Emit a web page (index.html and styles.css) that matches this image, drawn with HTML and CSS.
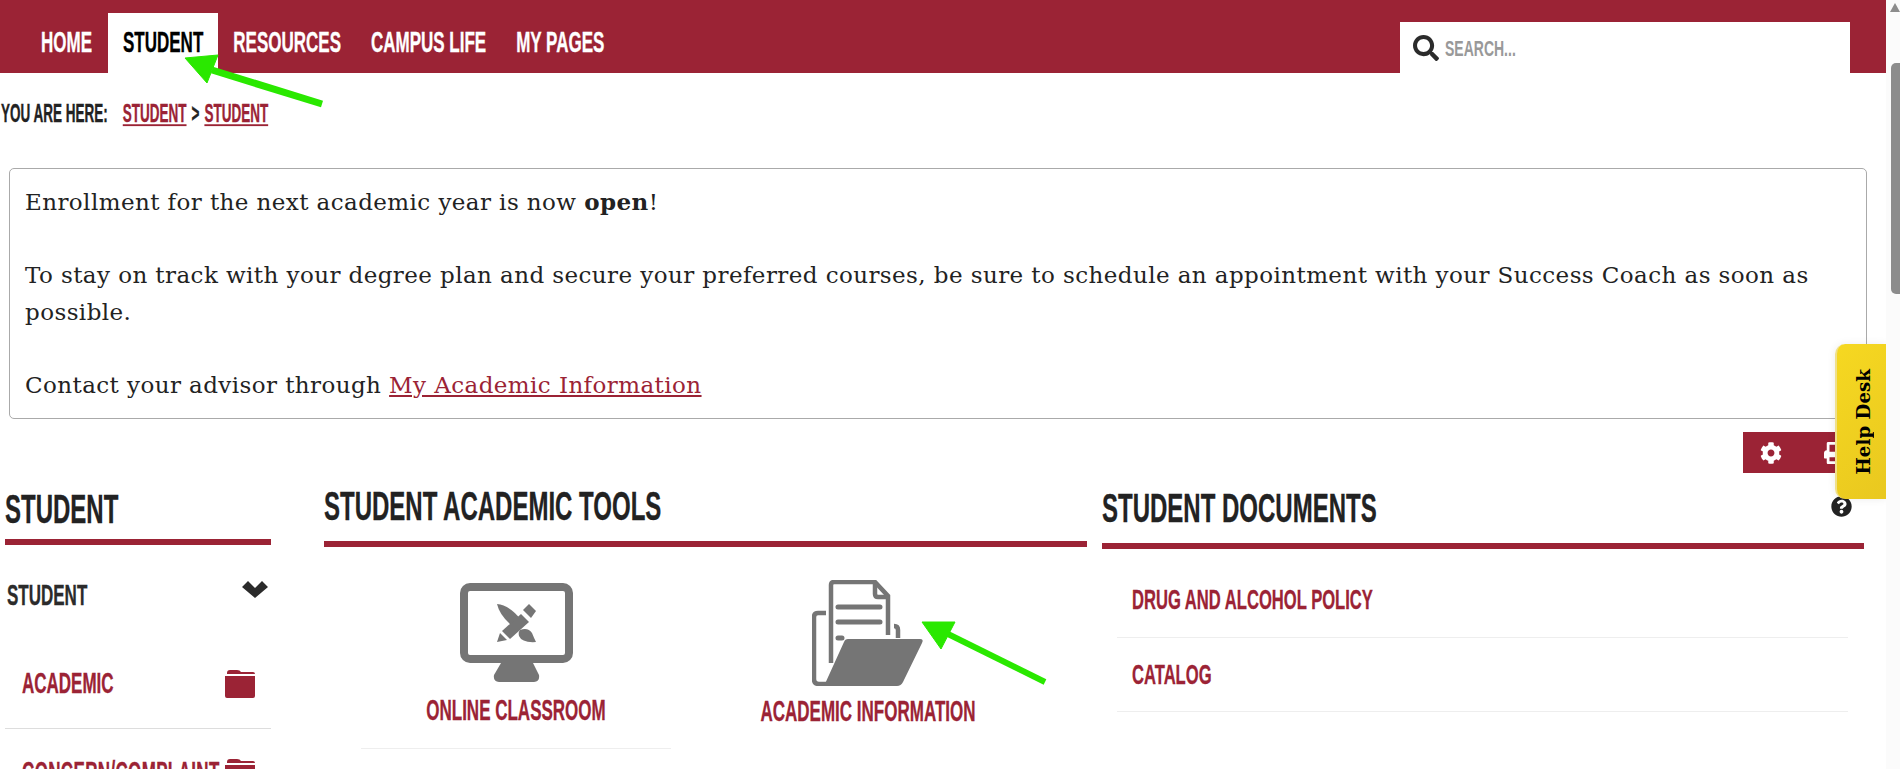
FILE: index.html
```html
<!DOCTYPE html>
<html lang="en">
<head>
    <meta charset="UTF-8">
    <title>Student</title>
    <link rel="stylesheet" href="styles.css">
</head>
<body>
    <div class="page">
        <header class="topbar">
            <nav class="mainnav">
                <a href="#"><span class="tall">Home</span></a>
                <a href="#" class="active"><span class="tall">Student</span></a>
                <a href="#"><span class="tall">Resources</span></a>
                <a href="#"><span class="tall">Campus Life</span></a>
                <a href="#"><span class="tall">My Pages</span></a>
            </nav>
            <div class="search">
                <svg class="search-icon" viewBox="0 0 512 512"><path d="M505 442.7L405.3 343c-4.5-4.5-10.6-7-17-7H372c27.6-35.3 44-79.7 44-128C416 93.1 322.9 0 208 0S0 93.1 0 208s93.1 208 208 208c48.3 0 92.7-16.4 128-44v16.3c0 6.4 2.5 12.5 7 17l99.7 99.7c9.4 9.4 24.6 9.4 33.9 0l28.3-28.3c9.4-9.4 9.4-24.6.1-34zM208 336c-70.7 0-128-57.2-128-128 0-70.7 57.2-128 128-128 70.7 0 128 57.2 128 128 0 70.7-57.2 128-128 128z"/></svg>
                <span class="tall">Search...</span>
            </div>
        </header>

        <div class="crumbs">
            <span class="tall crumb-label">You are here:</span>
            <a href="#" class="tall">Student</a>
            <span class="tall crumb-sep">&gt;</span>
            <a href="#" class="tall">Student</a>
        </div>

        <div class="notice">
            <p>Enrollment for the next academic year is now <strong>open</strong>!</p>
            <p>To stay on track with your degree plan and secure your preferred courses, be sure to schedule an appointment with your Success Coach as soon as possible.</p>
            <p>Contact your advisor through <a href="#">My Academic Information</a></p>
        </div>

        <div class="toolbar">
            <svg viewBox="0 0 512 512"><path d="M487.4 315.7l-42.6-24.6c4.3-23.2 4.3-47 0-70.2l42.6-24.6c4.9-2.8 7.1-8.6 5.5-14-11.1-35.6-30-67.8-54.7-94.6-3.8-4.1-10-5.1-14.8-2.3L380.8 110c-17.9-15.4-38.5-27.3-60.8-35.1V25.8c0-5.6-3.9-10.5-9.4-11.7-36.7-8.2-74.3-7.8-109.2 0-5.5 1.2-9.4 6.1-9.4 11.7V75c-22.2 7.9-42.8 19.8-60.8 35.1L88.7 85.5c-4.9-2.8-11-1.9-14.8 2.3-24.7 26.7-43.6 58.9-54.7 94.6-1.7 5.4.6 11.2 5.5 14L67.3 221c-4.3 23.2-4.3 47 0 70.2l-42.6 24.6c-4.9 2.8-7.1 8.6-5.5 14 11.1 35.6 30 67.8 54.7 94.6 3.8 4.1 10 5.1 14.8 2.3l42.6-24.6c17.9 15.4 38.5 27.3 60.8 35.1v49.2c0 5.6 3.9 10.5 9.4 11.7 36.7 8.2 74.3 7.8 109.2 0 5.5-1.2 9.4-6.1 9.4-11.7v-49.2c22.2-7.9 42.8-19.8 60.8-35.1l42.6 24.6c4.9 2.8 11 1.9 14.8-2.3 24.7-26.7 43.6-58.9 54.7-94.6 1.5-5.5-.7-11.3-5.6-14.1zM256 336c-44.1 0-80-35.9-80-80s35.9-80 80-80 80 35.9 80 80-35.9 80-80 80z"/></svg>
            <svg viewBox="0 0 512 512"><path d="M448 192V77.25c0-8.49-3.37-16.62-9.37-22.63L393.37 9.37c-6-6-14.14-9.37-22.63-9.37H96C78.33 0 64 14.33 64 32v160c-35.35 0-64 28.65-64 64v112c0 8.84 7.16 16 16 16h48v96c0 17.67 14.33 32 32 32h320c17.67 0 32-14.33 32-32v-96h48c8.84 0 16-7.16 16-16V256c0-35.35-28.65-64-64-64zm-64 256H128v-96h256v96zm0-224H128V64h192v48c0 8.84 7.16 16 16 16h48v96zm48 72c-13.25 0-24-10.75-24-24 0-13.26 10.75-24 24-24s24 10.74 24 24c0 13.25-10.75 24-24 24z"/></svg>
        </div>

        <div class="columns">
            <aside class="col-left">
                <h2 class="col-title"><span class="tall">Student</span></h2>
                <div class="menu-head">
                    <span class="tall">Student</span>
                    <svg viewBox="0 0 26 18"><path d="M0 7L6 1L13 8L20 1L26 7L13 18Z"/></svg>
                </div>
                <a href="#" class="menu-item">
                    <span class="tall">Academic</span>
                    <svg viewBox="0 0 30 28"><path d="M2 4V3Q2 0 5 0H12Q15 0 16 2H28Q30 2 30 4ZM0 6H30V26Q30 28 28 28H2Q0 28 0 26Z"/></svg>
                </a>
                <a href="#" class="menu-item">
                    <span class="tall">Concern/Complaint</span>
                    <svg viewBox="0 0 30 28"><path d="M2 4V3Q2 0 5 0H12Q15 0 16 2H28Q30 2 30 4ZM0 6H30V26Q30 28 28 28H2Q0 28 0 26Z"/></svg>
                </a>
            </aside>

            <main class="col-center">
                <h2 class="col-title"><span class="tall">Student Academic Tools</span></h2>
                <div class="tiles">
                    <a href="#" class="tile divided">
                        <svg class="tile-icon" width="113" height="99" viewBox="0 0 113 99">
                            <rect x="4" y="4" width="105" height="72" rx="6" fill="none" stroke="#757575" stroke-width="8"/>
                            <path d="M41 80H73L79 92Q80 99 74 99H39Q33 99 34 92Z"/>
                            <path d="M37 21Q50 22 62 38L55 45Q40 34 37 21Z"/>
                            <path d="M60 47Q68 44 72 50Q74 55 76 59Q62 60 59 53Q58 49 60 47Z"/>
                            <path d="M61 31L69 39L50 56L42 48Z"/>
                            <path d="M69 21L76 28L71 35L63 27Z"/>
                            <path d="M40 50L47 57L37 59Z"/>
                        </svg>
                        <span class="tall">Online Classroom</span>
                    </a>
                    <a href="#" class="tile">
                        <svg class="tile-icon" width="112" height="106" viewBox="0 0 112 106">
                            <g fill="none" stroke="#757575" stroke-width="4.5">
                                <path d="M19 83V5Q19 2 22 2H63L76 16V55"/>
                                <path d="M63 2V14Q63 17 66 17H76"/>
                                <path d="M14 33H6Q2 33 2 37V99Q2 104 7 104H14"/>
                                <path d="M82 46Q86 46 86 50V58"/>
                                <path d="M26 27H68M26 42H68M26 58H30" stroke-width="5" stroke-linecap="round"/>
                            </g>
                            <path d="M36 59H108Q112 59 110 63L91 102Q89 106 85 106H12L32 62Q33 59 36 59Z"/>
                        </svg>
                        <span class="tall">Academic Information</span>
                    </a>
                </div>
            </main>

            <section class="col-right">
                <h2 class="col-title">
                    <span class="tall">Student Documents</span>
                    <svg class="help" viewBox="0 0 512 512"><path d="M504 256c0 136.997-111.043 248-248 248S8 392.997 8 256C8 119.083 119.043 8 256 8s248 111.083 248 248zM262.655 90c-54.497 0-89.255 22.957-116.549 63.758-3.536 5.286-2.353 12.415 2.715 16.258l34.699 26.31c5.205 3.947 12.621 3.008 16.665-2.122 17.864-22.658 30.113-35.797 57.303-35.797 20.429 0 45.698 13.148 45.698 32.958 0 14.976-12.363 22.667-32.534 33.976C247.128 238.528 216 254.941 216 296v4c0 6.627 5.373 12 12 12h56c6.627 0 12-5.373 12-12v-1.333c0-28.462 83.186-29.647 83.186-106.667 0-58.002-60.165-102-116.531-102zM256 338c-25.365 0-46 20.635-46 46 0 25.364 20.635 46 46 46s46-20.636 46-46c0-25.365-20.635-46-46-46z"/></svg>
                </h2>
                <ul class="doc-list">
                    <li><a href="#" class="tall">Drug and Alcohol Policy</a></li>
                    <li><a href="#" class="tall">Catalog</a></li>
                </ul>
                <h2 class="col-title next">
                    <span class="tall">Life at Park</span>
                    <svg class="help" viewBox="0 0 512 512"><path d="M504 256c0 136.997-111.043 248-248 248S8 392.997 8 256C8 119.083 119.043 8 256 8s248 111.083 248 248zM262.655 90c-54.497 0-89.255 22.957-116.549 63.758-3.536 5.286-2.353 12.415 2.715 16.258l34.699 26.31c5.205 3.947 12.621 3.008 16.665-2.122 17.864-22.658 30.113-35.797 57.303-35.797 20.429 0 45.698 13.148 45.698 32.958 0 14.976-12.363 22.667-32.534 33.976C247.128 238.528 216 254.941 216 296v4c0 6.627 5.373 12 12 12h56c6.627 0 12-5.373 12-12v-1.333c0-28.462 83.186-29.647 83.186-106.667 0-58.002-60.165-102-116.531-102zM256 338c-25.365 0-46 20.635-46 46 0 25.364 20.635 46 46 46s46-20.636 46-46c0-25.365-20.635-46-46-46z"/></svg>
                </h2>
            </section>
        </div>

        <a href="#" class="helpdesk"><span>Help Desk</span></a>

        <svg class="arrows" width="1887" height="769" viewBox="0 0 1887 769">
            <line x1="212" y1="70" x2="322" y2="104" stroke-width="7"/>
            <polygon points="185,58 218,55 207,83"/>
            <line x1="948" y1="634" x2="1045" y2="682" stroke-width="6"/>
            <polygon points="922,622 955,622 941,649"/>
        </svg>
    </div>

    <div class="scrollbar">
        <div class="scroll-up"></div>
        <div class="scroll-thumb"></div>
    </div>
</body>
</html>
```

FILE: styles.css
```css
* {
    margin: 0;
    padding: 0;
    box-sizing: border-box;
}
html, body {
    height: 769px;
    overflow: hidden;
}
body {
    display: flex;
    font-family: "DejaVu Serif", serif;
    background: #fff;
    color: #222;
}
a {
    color: #9b2335;
}
.page {
    position: relative;
    flex: 1;
    min-width: 0;
    height: 769px;
    overflow: hidden;
}

/* stands in for the condensed display face: narrow type stretched upward */
.tall {
    display: inline-block;
    font-family: "Liberation Sans Narrow", "Liberation Sans", sans-serif;
    font-weight: bold;
    text-transform: uppercase;
    -webkit-text-stroke: 0.2px currentColor;
    transform: scaleY(1.72);
}

.topbar {
    display: flex;
    justify-content: space-between;
    align-items: flex-end;
    height: 73px;
    padding: 0 36px 0 26px;
    background: #9b2335;
}
.mainnav {
    display: flex;
}
.mainnav a {
    display: block;
    height: 60px;
    padding: 19px 15px 0;
    color: #fff;
    font-size: 17px;
    line-height: 21px;
    text-decoration: none;
}
.mainnav a:first-child {
    margin-right: 1px;
}
.mainnav a.active {
    background: #fff;
    color: #000;
}
.search {
    display: flex;
    align-items: center;
    gap: 6px;
    width: 450px;
    height: 51px;
    padding: 0 0 0 13px;
    background: #fff;
    color: #999;
    font-size: 14px;
}
.search .tall {
    -webkit-text-stroke: 0;
    transform: scaleY(1.62);
}
.search-icon {
    width: 26px;
    height: 26px;
    fill: #2b2b2b;
}

.crumbs {
    display: flex;
    align-items: center;
    padding: 32px 0 0 1px;
    height: 52px;
    font-size: 13.5px;
    line-height: 20px;
}
.crumbs .tall {
    color: #222;
    transform: scaleY(1.85);
}
.crumbs a.tall {
    color: #9b2335;
    text-decoration: underline;
}
.crumb-label {
    margin-right: 15px;
}
.crumb-sep {
    margin: 0 5px;
}

.notice {
    height: 251px;
    margin: 43px 19px 0 9px;
    padding: 15px 15px 0;
    border: 1px solid #aaa;
    border-radius: 5px;
    font-size: 23px;
    letter-spacing: 0.42px;
    line-height: 36.5px;
}
.notice p + p {
    margin-top: 36.5px;
}

.toolbar {
    display: flex;
    align-items: center;
    gap: 42px;
    width: 124px;
    height: 41px;
    margin: 13px 19px 0 auto;
    padding-left: 17px;
    background: #9b2335;
}
.toolbar svg {
    width: 22px;
    height: 22px;
    fill: #fff;
}

.columns {
    display: grid;
    grid-template-columns: 266px 763px 762px;
    padding-left: 5px;
}
.col-center {
    margin-left: 53px;
    width: 763px;
}
.col-right {
    margin-left: 68px;
    width: 762px;
}
.col-title {
    display: flex;
    justify-content: space-between;
    font-size: 24px;
    line-height: 30px;
    padding: 21px 0 15px;
    border-bottom: 6px solid #9b2335;
    color: #222;
}
.col-center .col-title {
    padding: 18px 0 20px;
}
.col-right .col-title {
    padding: 20px 12px 20px 0;
}
.col-title.next {
    margin-top: 51px;
}
.help {
    width: 21px;
    height: 21px;
    margin-top: 3px;
    fill: #222;
}

.menu-head {
    display: flex;
    justify-content: space-between;
    padding: 40px 3px 0 2px;
    font-size: 17px;
    line-height: 21px;
    color: #2b2b2b;
}
.menu-head svg {
    width: 26px;
    height: 18px;
    margin-top: -5px;
    fill: #2b2b2b;
}
.menu-item {
    display: flex;
    justify-content: space-between;
    align-items: center;
    padding: 67px 16px 34px 17px;
    font-size: 17px;
    line-height: 21px;
    text-decoration: none;
    border-bottom: 1px solid #ddd;
}
.menu-item + .menu-item {
    padding-top: 33px;
}
.menu-item + .menu-item .tall {
    letter-spacing: 0.35px;
}
.menu-item svg {
    width: 30px;
    height: 28px;
    margin: -4px 0;
    fill: #9b2335;
}

.tiles {
    display: grid;
    grid-template-columns: 352px 352px;
    padding: 36px 0 0 16px;
}
.tile {
    display: flex;
    flex-direction: column;
    align-items: center;
    height: 166px;
    font-size: 17px;
    line-height: 21px;
    text-decoration: none;
}
.tile.divided {
    margin: 0 21px;
    border-bottom: 1px solid #eee;
}
.tile-icon {
    height: 99px;
    fill: #757575;
}
.tile .tall {
    margin-top: 18px;
}
.tile:nth-child(2) .tile-icon {
    height: 106px;
    margin-top: -3px;
}
.tile:nth-child(2) .tall {
    margin-top: 15px;
}

.doc-list {
    list-style: none;
    margin: 0 16px 0 15px;
}
.doc-list li {
    padding: 26px 0 26px 15px;
    font-size: 16.6px;
    line-height: 21px;
    border-bottom: 1px solid #eee;
}
.doc-list li:first-child {
    padding: 40px 0 27px 15px;
}
.doc-list a.tall {
    text-decoration: none;
}

.helpdesk {
    position: absolute;
    top: 344px;
    right: 0;
    display: flex;
    align-items: center;
    justify-content: center;
    width: 51px;
    height: 155px;
    padding-left: 3px;
    border-left: 2px solid #f0e08a;
    border-radius: 10px 0 0 10px;
    background: linear-gradient(135deg, #f6d821, #e9c81f);
    box-shadow: 0 0 8px rgba(0, 0, 0, 0.08);
    color: #000;
    font-size: 18.3px;
    font-weight: bold;
    text-decoration: none;
}
.helpdesk span {
    writing-mode: vertical-rl;
    transform: rotate(180deg);
}
.arrows {
    position: absolute;
    top: 0;
    left: 0;
    pointer-events: none;
    stroke: #2ae800;
    fill: #2ae800;
}

.scrollbar {
    flex: 0 0 13px;
    background: #fbfbfb;
    padding: 3px 0 0 5px;
}
.scroll-up {
    width: 0;
    height: 0;
    margin-left: -1px;
    border-left: 5px solid transparent;
    border-right: 5px solid transparent;
    border-bottom: 9px solid #8c8c8c;
}
.scroll-thumb {
    height: 231px;
    margin-top: 51px;
    border-radius: 5px 0 0 5px;
    background: #8c8c8c;
}
```
